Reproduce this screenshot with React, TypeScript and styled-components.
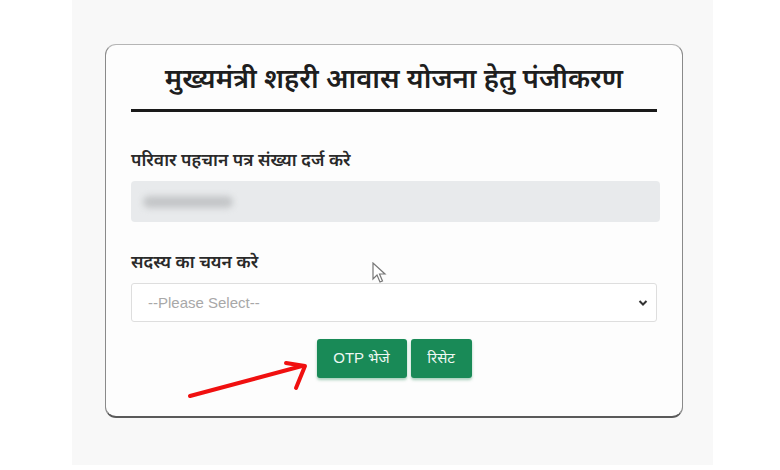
import React from "react";
import styled, { createGlobalStyle } from "styled-components";

const Global = createGlobalStyle`
  html, body { margin: 0; padding: 0; background: #ffffff; }
  body { font-family: "Noto Sans Devanagari", "Noto Sans", "Liberation Sans", sans-serif; }
`;

const Stage = styled.div`
  width: 780px;
  height: 470px;
  background: #ffffff;
  display: flex;
`;

const Panel = styled.div`
  position: relative;
  margin-left: 72px;
  width: 641px;
  height: 465px;
  background: #f8f8f8;
  padding-top: 44px;
  padding-left: 33px;
  box-sizing: border-box;
`;

const Card = styled.div`
  position: relative;
  width: 578px;
  height: 374px;
  box-sizing: border-box;
  background: #fdfdfd;
  border: 1.5px solid #8a8a8a;
  border-top-color: #b5b5b5;
  border-bottom: 2px solid #5a5a5a;
  border-radius: 11px;
  padding: 16px 25px 0 25px;
  display: flex;
  flex-direction: column;
`;

const Title = styled.h1`
  margin: 0;
  text-align: center;
  font-size: 27.5px;
  font-weight: 600;
  color: #1e1e1e;
  line-height: 40px;
`;

const Rule = styled.div`
  margin-top: 8px;
  height: 3px;
  background: #1a1a1a;
`;

const Label = styled.div<{ $top: number }>`
  margin-top: ${(p) => p.$top}px;
  font-size: 17.5px;
  font-weight: 600;
  color: #2a2a2a;
  line-height: 22px;
`;

const FilledInput = styled.div`
  margin-top: 8px;
  height: 41px;
  background: #e8eaec;
  border-radius: 4px;
  display: flex;
  align-items: center;
  padding-left: 12px;
  box-sizing: border-box;
  width: 529px;
`;

const Blur = styled.div`
  width: 90px;
  height: 12px;
  background: #c4c6c8;
  border-radius: 6px;
  filter: blur(3px);
`;

const Select = styled.div`
  margin-top: 8px;
  height: 39px;
  background: #ffffff;
  border: 1px solid #dedede;
  border-radius: 3px;
  display: flex;
  align-items: center;
  justify-content: space-between;
  padding: 0 8px 0 16px;
  box-sizing: border-box;
  font-family: "Liberation Sans", Arial, sans-serif;
  font-size: 15px;
  color: #a8a8a8;
`;

const Buttons = styled.div`
  margin-top: 17px;
  display: flex;
  justify-content: center;
  gap: 4px;
`;

const Btn = styled.button<{ $w: number }>`
  width: ${(p) => p.$w}px;
  height: 39px;
  border: none;
  border-radius: 3px;
  background: #198a57;
  color: #eef7f2;
  font-family: "Liberation Sans", "Noto Sans Devanagari", sans-serif;
  font-size: 15px;
  box-shadow: 0 2px 3px rgba(0, 120, 60, 0.35);
  display: flex;
  align-items: center;
  justify-content: center;
`;

const Overlay = styled.svg`
  position: absolute;
  pointer-events: none;
`;

export default function App() {
  return (
    <>
      <Global />
      <Stage>
        <Panel>
          <Card>
            <Title>मुख्यमंत्री शहरी आवास योजना हेतु पंजीकरण</Title>
            <Rule />
            <Label $top={39}>परिवार पहचान पत्र संख्या दर्ज करे</Label>
            <FilledInput>
              <Blur />
            </FilledInput>
            <Label $top={31}>सदस्य का चयन करे</Label>
            <Select>
              <span>--Please Select--</span>
              <svg width="10" height="8" viewBox="0 0 10 8">
                <path d="M1.5 2 L5 5.5 L8.5 2" stroke="#333" strokeWidth="2" fill="none" />
              </svg>
            </Select>
            <Buttons>
              <Btn $w={90}>OTP भेजे</Btn>
              <Btn $w={61}>रिसेट</Btn>
            </Buttons>
          </Card>
          <Overlay
            style={{ left: 300, top: 262 }}
            width="16"
            height="22"
            viewBox="0 0 16 22"
          >
            <path
              d="M1 1 L1 17 L5 13 L8 20 L10.5 19 L7.5 12 L13 12 Z"
              fill="#ffffff"
              stroke="#777"
              strokeWidth="1.2"
            />
          </Overlay>
          <Overlay
            style={{ left: 112, top: 358 }}
            width="130"
            height="45"
            viewBox="0 0 130 45"
          >
            <line x1="6" y1="38" x2="118" y2="8" stroke="#f01010" strokeWidth="4" strokeLinecap="round" />
            <polyline
              points="102,5 121,8 112,30"
              fill="none"
              stroke="#f01010"
              strokeWidth="4"
              strokeLinecap="round"
              strokeLinejoin="round"
            />
          </Overlay>
        </Panel>
      </Stage>
    </>
  );
}
